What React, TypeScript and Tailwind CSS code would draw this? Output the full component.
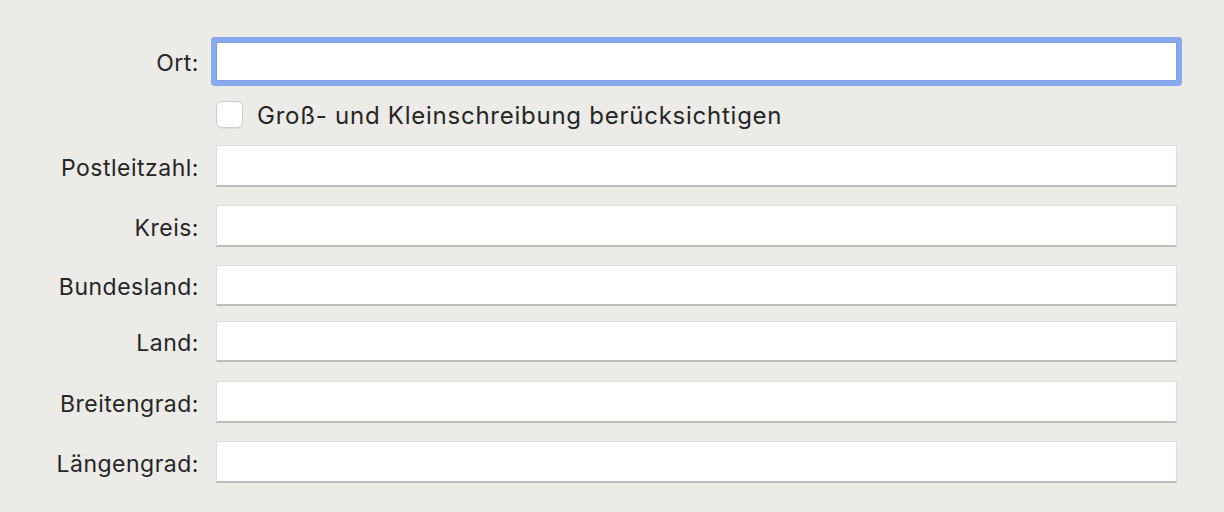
export default function App() {
  return (
    <div
      className="min-h-[512px] w-full bg-[#ecebe8] text-[#262626]"
      style={{ fontFamily: "Inter, 'Noto Sans', sans-serif" }}
    >
      <div className="flex flex-col pt-[42px] pr-[47px]">
        {/* Ort, focused */}
        <div className="flex items-center h-[39px]">
          <Label text="Ort:" />
          <div className="flex-1 h-full bg-white border border-[#7e9fe6] rounded-[1px] shadow-[0_0_0_5px_#89a9ee]" />
        </div>

        {/* checkbox */}
        <div className="flex items-center h-[27px] mt-[20px]">
          <div className="w-[216px] shrink-0" />
          <div className="w-[27px] h-[27px] rounded-[6px] bg-white border border-[#cdcdcd] shadow-[0_1px_1px_rgba(0,0,0,0.06)]" />
          <span className="ml-[14px] pt-[3px] text-[24px] leading-none tracking-[0.75px]">Groß- und Kleinschreibung berücksichtigen</span>
        </div>

        <Row label="Postleitzahl:" mt="mt-[17px]" h="h-[42px]" />
        <Row label="Kreis:" mt="mt-[18px]" h="h-[42px]" />
        <Row label="Bundesland:" mt="mt-[18px]" h="h-[41px]" />
        <Row label="Land:" mt="mt-[15px]" h="h-[41px]" />
        <Row label="Breitengrad:" mt="mt-[19px]" h="h-[42px]" />
        <Row label="Längengrad:" mt="mt-[18px]" h="h-[42px]" />
      </div>
    </div>
  );
}

function Label({ text }: { text: string }) {
  return (
    <div className="w-[216px] shrink-0 pr-[17px] pt-[4px] text-right text-[23px] leading-none tracking-[0.5px]">{text}</div>
  );
}

function Row({ label, mt, h }: { label: string; mt: string; h: string }) {
  return (
    <div className={`flex items-center ${mt} ${h}`}>
      <Label text={label} />
      <div className="flex-1 h-full bg-white border border-[#dedddb] border-b-2 border-b-[#bdbdbb]" />
    </div>
  );
}
